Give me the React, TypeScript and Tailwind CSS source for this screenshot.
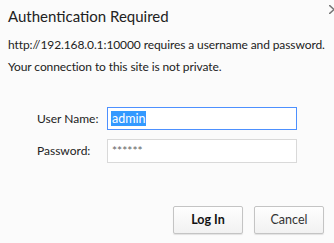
export default function App() {
  return (
    <div
      className="relative w-[334px] h-[243px] bg-[#fbfbfb] text-[#222] overflow-hidden"
      style={{ fontFamily: 'Lato, "Noto Sans", sans-serif' }}
    >
      <svg className="absolute right-0 top-[5px]" width="5" height="9" viewBox="0 0 5 9">
        <path d="M0 0 L5 4.5 M0 9 L5 4.5" stroke="#777" strokeWidth="1.6" fill="none" />
      </svg>
      <div className="pl-[8px] pt-[4px] whitespace-nowrap">
        <h1 className="text-[15px] leading-[24px] text-[#222]">Authentication Required</h1>
        <p className="mt-[9px] text-[12px] tracking-[-0.1px] leading-[16px]">
          http://192.168.0.1:10000 requires a username and password.
        </p>
        <p className="mt-[6px] text-[12px] tracking-[-0.1px] leading-[16px]">
          Your connection to this site is not private.
        </p>
      </div>
      <div className="mt-[32px] flex flex-col gap-[9px]">
        <div className="flex items-center">
          <label className="w-[107px] pl-[37px] text-[12px]">User Name:</label>
          <div className="w-[190px] h-[23px] border border-[#4d90fe] bg-white flex items-center pl-[3px]">
            <span className="bg-[#3399ff] text-white text-[12.5px] leading-[15px] px-[1px]">admin</span>
          </div>
        </div>
        <div className="flex items-center">
          <label className="w-[107px] pl-[37px] text-[12px]">Password:</label>
          <div className="w-[190px] h-[24px] border border-[#d9d9d9] bg-white flex items-center pl-[4px] text-[12px] text-[#666]">
            ******
          </div>
        </div>
      </div>
      <div className="mt-[43px] flex justify-end gap-[11px] pr-[10px]">
        <button className="w-[70px] h-[28px] rounded-[2px] border border-[#c4c4c4] bg-gradient-to-b from-[#fefefe] to-[#f1f1f1] shadow-[0_1px_1px_rgba(0,0,0,0.1)] text-[12.5px] font-bold text-[#111]">
          Log In
        </button>
        <button className="w-[70px] h-[28px] rounded-[2px] border border-[#c4c4c4] bg-gradient-to-b from-[#fefefe] to-[#f1f1f1] shadow-[0_1px_1px_rgba(0,0,0,0.1)] text-[12.5px] text-[#333]">
          Cancel
        </button>
      </div>
    </div>
  );
}
